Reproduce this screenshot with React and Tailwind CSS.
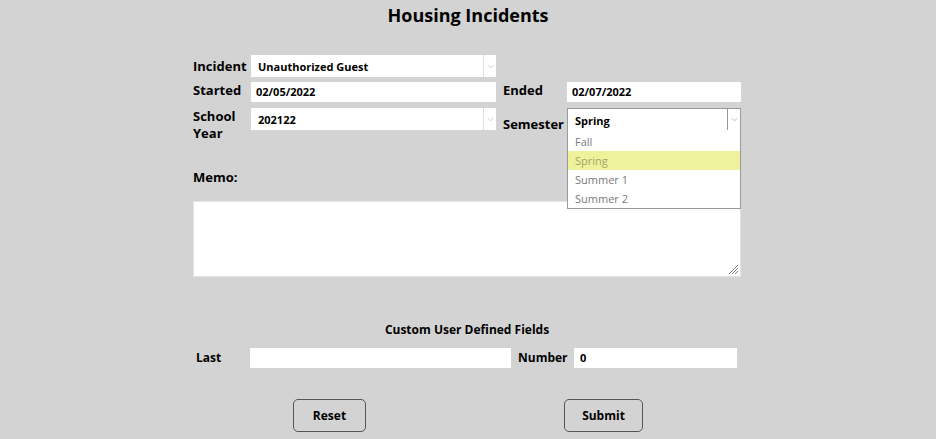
import { useState } from 'react';

const Chevron = ({ className = '' }) => (
  <svg viewBox="0 0 8 5" className={`w-[7px] h-[5px] ${className}`} fill="none" stroke="currentColor" strokeWidth="1">
    <path d="M1 1l3 3 3-3" />
  </svg>
);

// fake select box: white field with a small arrow cell on the right
const SelectBox = ({ value, open, children }) => (
  <div className={`relative h-full bg-white flex ${open ? 'border border-[#9a9a9a]' : ''}`}>
    <div className="flex-1 flex items-center text-[11px] font-bold pl-[7px] pt-[3px]">{value}</div>
    <div className={`w-[13px] flex items-center justify-center border-l ${open ? 'border-[#9a9a9a] text-[#b0b0b0]' : 'border-[#dedede] text-[#c4c4c4]'}`}>
      <Chevron />
    </div>
    {children}
  </div>
);

const TextBox = ({ value, className = '' }) => (
  <div className={`h-full bg-white flex items-center text-[11px] font-bold pl-[5px] pt-[1px] ${className}`}>{value}</div>
);

// hatched resize corner of the memo box
const Grip = () => (
  <svg viewBox="0 0 12 12" className="absolute right-[2px] bottom-[2px] w-[12px] h-[12px] text-[#8a8a8a]" fill="none" stroke="currentColor" strokeWidth="1">
    <path d="M11 2L2 11M11 5L5 11M11 8L8 11" />
  </svg>
);

const semesters = ['Fall', 'Spring', 'Summer 1', 'Summer 2'];

export default function App() {
  const [semester] = useState('Spring');

  return (
    <div className="min-h-screen bg-[#d3d3d3] text-black font-['Open_Sans',sans-serif]">
      <h1 className="h-[30px] leading-[30px] text-center text-[18px] font-bold">Housing Incidents</h1>

      <div className="ml-[193px] w-[548px] mt-[25px]">
        <div className="grid grid-cols-[58px_245px_71px_174px] text-[13px] font-bold">
          {/* incident */}
          <div className="h-[22px] pt-[2px] leading-[18px]">Incident</div>
          <SelectBox value="Unauthorized Guest" />
          <div />
          <div />

          {/* dates */}
          <div className="h-[20px] mt-[5px] leading-[16px]">Started</div>
          <div className="h-[20px] mt-[5px]"><TextBox value="02/05/2022" /></div>
          <div className="h-[20px] mt-[5px] leading-[16px] pl-[7px]">Ended</div>
          <div className="h-[20px] mt-[5px]"><TextBox value="02/07/2022" /></div>

          {/* school year / semester */}
          <div className="h-[23px] mt-[6px] leading-[17px]">School<br />Year</div>
          <div className="h-[22px] mt-[6px]"><SelectBox value="202122" /></div>
          <div className="h-[23px] mt-[6px] pt-[8px] leading-[17px] pl-[7px]">Semester</div>
          <div className="h-[23px] mt-[6px] relative z-10">
            <SelectBox value={semester} open>
              <ul className="absolute left-[-1px] right-[-1px] top-full pt-[2px] bg-white border border-t-0 border-[#9a9a9a] text-[11px] font-normal">
                {semesters.map((s) => (
                  <li
                    key={s}
                    className={`h-[19px] leading-[19px] pl-[7px] ${s === semester ? 'bg-[#eef39b] text-[#a2a466]' : 'text-[#7a7a7a]'}`}
                  >
                    {s}
                  </li>
                ))}
              </ul>
            </SelectBox>
          </div>
        </div>

        <div className="mt-[37px] text-[13px] font-bold leading-[18px]">Memo:</div>
        <div className="relative mt-[15px]">
          <textarea className="block w-full h-[76px] bg-white border border-[#e4e4e4] resize-none outline-none" />
          <Grip />
        </div>

        <div className="mt-[44px] text-center text-[12px] font-bold leading-[18px]">Custom User Defined Fields</div>

        <div className="mt-[9px] flex h-[20px] text-[12px] font-bold">
          <div className="w-[57px] pl-[3px] leading-[20px]">Last</div>
          <div className="w-[261px]"><TextBox value="" /></div>
          <div className="ml-[7px] w-[56px] leading-[20px]">Number</div>
          <div className="w-[163px]"><TextBox value="0" className="pl-[6px]" /></div>
        </div>

        <div className="mt-[31px] flex text-[12px] font-bold">
          <button className="ml-[100px] w-[73px] h-[33px] border border-[#555] rounded-[5px]">Reset</button>
          <button className="ml-[198px] w-[79px] h-[33px] border border-[#555] rounded-[5px]">Submit</button>
        </div>
      </div>
    </div>
  );
}
